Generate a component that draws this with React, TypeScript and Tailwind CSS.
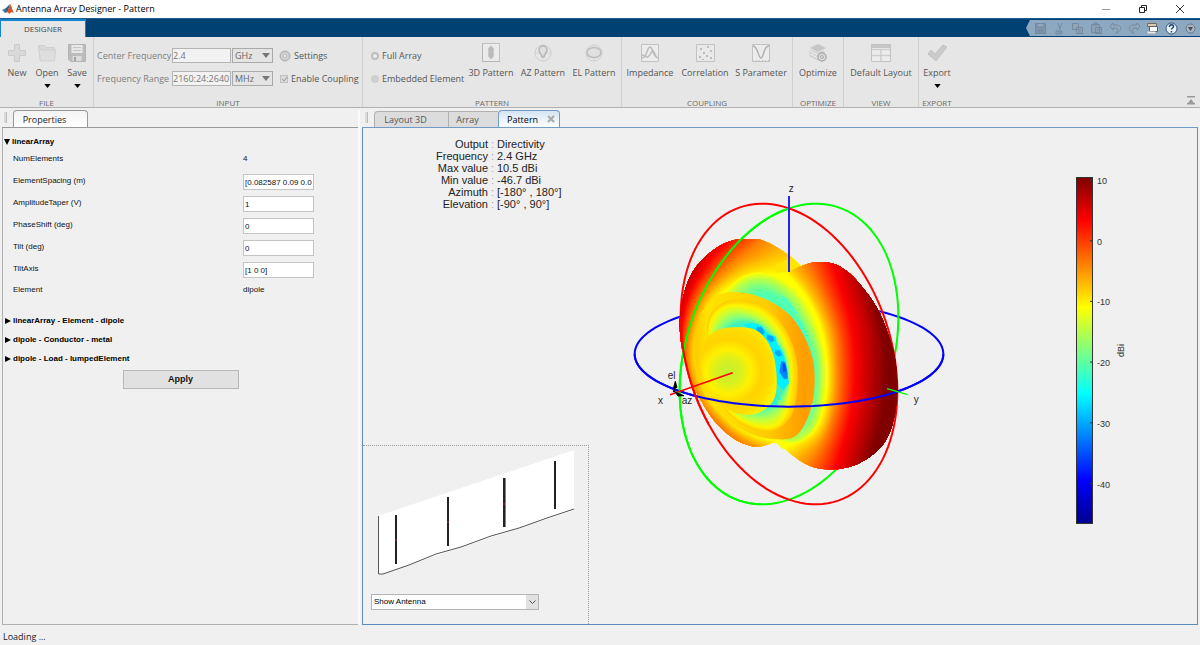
import React from 'react';

type Point = [number, number];

interface Contour {
    color: [number, number, number];
    points: Point[];
}

/* ---------- Geometry helpers for the radiation pattern ---------- */

// Smooth curve through a list of points, a repeated point makes a corner
const smooth = (pts: Point[], closed: boolean) => {
    const n = pts.length;
    const at = (i: number) => (closed ? pts[(i + n) % n] : pts[Math.min(Math.max(i, 0), n - 1)]);
    let d = `M${pts[0][0]} ${pts[0][1]}`;
    const segments = closed ? n : n - 1;
    for (let i = 0; i < segments; i++) {
        const [p0, p1, p2, p3] = [at(i - 1), at(i), at(i + 1), at(i + 2)];
        d += `C${p1[0] + (p2[0] - p0[0]) / 6} ${p1[1] + (p2[1] - p0[1]) / 6} ${p2[0] - (p3[0] - p1[0]) / 6} ${p2[1] - (p3[1] - p1[1]) / 6} ${p2[0]} ${p2[1]}`;
    }
    return closed ? d + 'Z' : d;
};

// Great circle of the reference sphere, spanned by two projected axes
const ring = (u: Point, v: Point, from: number, to: number) => {
    const pts: string[] = [];
    for (let a = from; a <= to; a += 3) {
        const c = Math.cos((a * Math.PI) / 180);
        const s = Math.sin((a * Math.PI) / 180);
        pts.push(`${(507 + c * u[0] + s * v[0]).toFixed(1)},${(552 + c * u[1] + s * v[1]).toFixed(1)}`);
    }
    return pts.join(' ');
};

const STEPS = 10;

// Blends neighbouring contours so the colour bands look continuous
const Bands = ({ contours, tail }: { contours: Contour[]; tail?: string }) => {
    const paths: React.ReactNode[] = [];
    for (let k = 0; k < contours.length - 1; k++) {
        const a = contours[k];
        const b = contours[k + 1];
        for (let s = 0; s < STEPS; s++) {
            const t = s / STEPS;
            const pts = a.points.map((p, i): Point => [p[0] + (b.points[i][0] - p[0]) * t, p[1] + (b.points[i][1] - p[1]) * t]);
            const rgb = a.color.map((c, i) => Math.round(c + (b.color[i] - c) * t));
            paths.push(<path key={`${k}-${s}`} d={smooth(pts, !tail) + (tail || '')} fill={`rgb(${rgb.join(',')})`} />);
        }
    }
    const last = contours[contours.length - 1];
    paths.push(<path key="last" d={smooth(last.points, !tail) + (tail || '')} fill={`rgb(${last.color.join(',')})`} />);
    return <>{paths}</>;
};

const leftLobe: Point[] = [
    [548, 292], [548, 292], [500, 250], [430, 212], [385, 209], [335, 212], [280, 240], [225, 295], [195, 360], [180, 440], [181, 500],
    [191, 560], [212, 630], [242, 690], [285, 755], [340, 805], [390, 827], [430, 828], [465, 817], [500, 830], [560, 700], [580, 450],
];

const rightLobe: Point[] = [
    [507, 306], [507, 306], [545, 288], [590, 276], [640, 281], [680, 303], [722, 345], [770, 412], [800, 480], [824, 560], [832, 650],
    [825, 730], [808, 790], [780, 835], [735, 870], [690, 890], [640, 898], [590, 894], [540, 872], [465, 817], [465, 817], [400, 700], [400, 450],
];

const leftContours: Contour[] = [
    { color: [255, 255, 0], points: [[560, 315], [480, 315], [390, 325], [300, 380], [250, 470], [240, 560], [265, 660], [335, 750], [410, 797], [480, 812]] },
    { color: [255, 190, 0], points: [[505, 240], [440, 270], [365, 300], [280, 365], [232, 455], [216, 560], [245, 665], [315, 755], [385, 805], [465, 835]] },
    { color: [255, 128, 0], points: [[440, 200], [385, 245], [325, 290], [255, 365], [215, 450], [202, 560], [228, 670], [298, 762], [362, 815], [435, 850]] },
    { color: [255, 64, 0], points: [[395, 195], [340, 238], [290, 285], [230, 365], [200, 450], [190, 560], [212, 680], [275, 780], [335, 840], [390, 860]] },
    { color: [250, 0, 0], points: [[335, 195], [295, 238], [255, 290], [210, 370], [188, 450], [178, 560], [195, 690], [255, 800], [300, 860], [350, 880]] },
    { color: [180, 0, 0], points: [[265, 200], [235, 250], [210, 300], [186, 370], [172, 450], [160, 560], [170, 700], [220, 820], [270, 880], [320, 900]] },
];

const rightContours: Contour[] = [
    { color: [255, 255, 0], points: [[470, 290], [545, 365], [594, 455], [618, 560], [616, 680], [580, 780], [490, 830]] },
    { color: [255, 190, 0], points: [[505, 280], [570, 365], [615, 460], [634, 560], [632, 685], [600, 790], [515, 865]] },
    { color: [255, 128, 0], points: [[545, 265], [598, 360], [637, 460], [652, 560], [649, 690], [617, 800], [560, 890]] },
    { color: [255, 64, 0], points: [[585, 255], [627, 360], [661, 460], [675, 565], [671, 695], [642, 805], [600, 910]] },
    { color: [250, 0, 0], points: [[625, 250], [663, 360], [692, 460], [704, 570], [698, 700], [672, 810], [640, 915]] },
    { color: [190, 0, 0], points: [[680, 260], [713, 360], [740, 460], [750, 570], [744, 700], [720, 810], [690, 915]] },
    { color: [128, 0, 0], points: [[735, 290], [762, 380], [785, 470], [797, 570], [791, 700], [770, 800], [740, 900]] },
];

// Trough between the main lobe and the first side lobe
const outerTrough: Contour[] = [
    { color: [255, 255, 0], points: [[340, 340], [430, 308], [520, 350], [578, 430], [614, 550], [614, 690], [578, 790], [490, 816], [330, 700], [260, 480]] },
    { color: [192, 255, 64], points: [[350, 352], [430, 325], [505, 362], [562, 440], [602, 550], [602, 685], [572, 780], [490, 806], [330, 690], [270, 480]] },
    { color: [128, 255, 128], points: [[375, 365], [432, 347], [497, 384], [550, 455], [590, 555], [592, 670], [562, 760], [480, 790], [340, 680], [280, 480]] },
    { color: [80, 255, 176], points: [[390, 390], [440, 370], [492, 402], [538, 462], [574, 550], [580, 610], [550, 680], [480, 700], [350, 640], [300, 480]] },
];

const sideLobe: Point[] = [
    [335, 366], [400, 374], [465, 402], [520, 447], [558, 510], [581, 580], [583, 660], [573, 715], [553, 765], [522, 801],
    [470, 808], [400, 795], [330, 755], [268, 695], [240, 640], [225, 560], [230, 480], [250, 420], [285, 380],
];

// Trough between the first side lobe and the end-fire lobe
const innerTrough: Contour[] = [
    { color: [255, 200, 0], points: [[325, 392], [425, 404], [492, 470], [528, 560], [532, 650], [515, 735], [458, 783], [375, 768], [300, 700], [270, 620], [262, 530], [268, 440]] },
    { color: [255, 245, 0], points: [[325, 407], [412, 418], [475, 475], [510, 560], [512, 650], [495, 735], [452, 773], [375, 756], [305, 695], [274, 610], [266, 530], [275, 450]] },
    { color: [200, 255, 55], points: [[332, 425], [402, 435], [460, 480], [503, 560], [507, 650], [484, 722], [442, 752], [370, 742], [312, 690], [280, 610], [272, 530], [285, 465]] },
    { color: [128, 255, 128], points: [[345, 444], [400, 450], [452, 486], [497, 560], [503, 650], [474, 705], [432, 732], [370, 722], [320, 680], [285, 610], [280, 530], [300, 477]] },
    { color: [64, 240, 190], points: [[355, 460], [402, 462], [445, 495], [490, 560], [496, 640], [470, 685], [425, 712], [370, 710], [330, 670], [295, 610], [295, 540], [315, 485]] },
];

const endLobe: Point[] = [
    [340, 472], [400, 477], [438, 508], [460, 555], [470, 620], [465, 680], [440, 714], [400, 733], [350, 730], [295, 697],
    [257, 645], [241, 580], [250, 520], [285, 483],
];

const RadiationPattern = () => (
    <svg viewBox="0 0 1020 1035" className="w-full max-w-[340px]" role="img" aria-label="3D directivity pattern">
        <defs>
            <clipPath id="left-lobe"><path d={smooth(leftLobe, true)} /></clipPath>
            <clipPath id="right-lobe"><path d={smooth(rightLobe, true)} /></clipPath>
            <linearGradient id="side-lobe" x1="0" x2="1" y1="0" y2="0">
                <stop offset="0" stopColor="#ffc800" />
                <stop offset="0.1" stopColor="#ffe400" />
                <stop offset="0.3" stopColor="#ffdc00" />
                <stop offset="0.6" stopColor="#ffcc00" />
                <stop offset="0.8" stopColor="#ffac00" />
                <stop offset="0.92" stopColor="#ff9c00" />
                <stop offset="1" stopColor="#ffa400" />
            </linearGradient>
            <radialGradient id="end-lobe" gradientUnits="userSpaceOnUse" cx="325" cy="605" r="150">
                <stop offset="0" stopColor="#c4f02c" />
                <stop offset="0.25" stopColor="#d8f020" />
                <stop offset="0.45" stopColor="#fff000" />
                <stop offset="0.65" stopColor="#ffd400" />
                <stop offset="0.85" stopColor="#ffdc00" />
                <stop offset="1" stopColor="#fff000" />
            </radialGradient>
        </defs>

        {/* Circles behind the surface */}
        <g fill="none" strokeWidth="6">
            <polyline points={ring([463, 0], [0, 158], 0, 360)} stroke="#0000ff" />
            <polyline points={ring([328, -111], [0, -437], 0, 360)} stroke="#00ff00" />
            <polyline points={ring([325, 111], [0, -437], 0, 360)} stroke="#ff0000" />
        </g>

        {/* Main lobe */}
        <g clipPath="url(#left-lobe)">
            <rect width="1020" height="1035" fill="#ffff00" />
            <Bands contours={leftContours} tail="L0 1035L0 0Z" />
            <path d="M560 292L507 306L468 308L466 285L515 262Z" fill="#ffe600" />
        </g>
        <g clipPath="url(#right-lobe)">
            <path d="M440 830L420 700L430 400L507 306L620 400L620 860Z" fill="#ffff00" />
            <Bands contours={rightContours} tail="L1020 1035L1020 0Z" />
        </g>

        {/* Side lobes */}
        <Bands contours={outerTrough} />
        <path d="M478 372L500 385L520 412L535 432L522 432L495 404Z" fill="#50ffc0" />
        <path d="M530 445L545 455L552 480L562 500L554 506L545 490Z" fill="#40ffd0" />
        <path d={smooth(sideLobe, true)} fill="url(#side-lobe)" />
        <Bands contours={innerTrough} />
        <g fill="#00f0ff">
            <path d="M368 464L395 459L425 466L440 488L468 500L470 520L488 545L500 590L507 640L490 660L470 640L464 560L438 510L400 480Z" />
            <path d="M466 668L474 672L484 690L470 688L474 705L455 703L430 722L444 700Z" fill="#2cf0d0" />
        </g>
        <g fill="#00a8ff">
            <path d="M412 470L426 472L434 486L428 494L414 489L408 478Z" />
            <path d="M442 494L458 498L464 512L452 517L440 506Z" />
            <path d="M466 540L480 542L486 556L474 560L464 550Z" />
            <path d="M484 572L496 577L502 604L503 626L492 628L478 606Z" fill="#0084ff" />
            <path d="M488 578L495 582L498 604L489 606Z" fill="#0048f0" />
        </g>
        <path d={smooth(endLobe, true)} fill="url(#end-lobe)" />

        {/* Circles and axes in front of the surface */}
        <g fill="none" strokeWidth="6">
            <polyline points={ring([463, 0], [0, 158], 0, 180)} stroke="#0000ff" />
            <polyline points={ring([328, -111], [0, -437], 90, 255)} stroke="#00ff00" />
            <polyline points={ring([325, 111], [0, -437], 180, 222)} stroke="#ff0000" />
            <path d="M507 78V306" stroke="#2424f8" />
            <path d="M150 674L338 608" stroke="#ff0000" strokeWidth="5" />
            <path d="M801 656L863 674" stroke="#00ff00" strokeWidth="4" />
        </g>

        {/* Azimuth and elevation arrows */}
        <g stroke="#000" strokeWidth="3" fill="#000">
            <path d="M160 656L166 634L171 652Z" />
            <path d="M166 667L192 677L174 678Z" />
            <path d="M164 655L161 664L170 668" fill="none" strokeWidth="4" />
        </g>
        <g className="font-['Liberation_Sans',sans-serif] text-[30px]" fill="#262626">
            <text x="506" y="66">z</text>
            <text x="114" y="701">x</text>
            <text x="881" y="698">y</text>
            <text x="143" y="627">el</text>
            <text x="185" y="701">az</text>
        </g>
    </svg>
);

const ticks = [10, 0, -10, -20, -30, -40];

const ColorBar = () => (
    <svg viewBox="0 0 60 350" className="w-[60px] h-[350px]" role="img" aria-label="Directivity scale in dBi">
        <defs>
            <linearGradient id="jet" x1="0" x2="0" y1="0" y2="1">
                <stop offset="0" stopColor="#800000" />
                <stop offset="0.125" stopColor="#ff0000" />
                <stop offset="0.375" stopColor="#ffff00" />
                <stop offset="0.625" stopColor="#00ffff" />
                <stop offset="0.875" stopColor="#0000ff" />
                <stop offset="1" stopColor="#00008f" />
            </linearGradient>
        </defs>
        <rect x="0.5" y="0.5" width="16" height="346" fill="url(#jet)" stroke="#333" />
        <g className="font-['Liberation_Sans',sans-serif] text-[9px]" fill="#333">
            {ticks.map((tick) => (
                <React.Fragment key={tick}>
                    <path d={`M14 ${3 + (10 - tick) * 6.07}h3`} stroke="#333" />
                    <text x="21" y={7 + (10 - tick) * 6.07}>{tick}</text>
                </React.Fragment>
            ))}
            <text transform="translate(48 180) rotate(-90)">dBi</text>
        </g>
    </svg>
);

/* ---------- Toolstrip icons ---------- */

const Icon = ({ children }: { children: React.ReactNode }) => (
    <svg viewBox="0 0 20 20" className="w-5 h-5" fill="none" stroke="#c2c2c2" aria-hidden="true">{children}</svg>
);

const PlusIcon = () => <Icon><path d="M7.500 1.500h5v6h6v5h-6v6h-5v-6h-6v-5h6z" fill="#d9d9d9" stroke="#cacaca" /></Icon>;

const FolderIcon = () => (
    <Icon>
        <path d="M1.500 2.500h6l2 2h8v13h-14z" fill="#dadada" stroke="#cecece" />
        <path d="M1.500 3l3 4h14l-1 11h-14z" fill="#dedede" stroke="#d0d0d0" />
    </Icon>
);

const SaveIcon = () => (
    <Icon>
        <path d="M1.500 1.500h17v17h-15l-2-2z" fill="#bcbcbc" stroke="#b4b4b4" />
        <path d="M4.500 2h11v8h-11z" fill="#e8e8e8" stroke="none" />
        <path d="M6 4.500h8M6 7.500h8" stroke="#c4c4c4" />
        <path d="M5.500 13h9v5h-9z" fill="#dcdcdc" stroke="none" />
        <path d="M7 14h2v4h-2z" fill="#a5a5a5" stroke="none" />
    </Icon>
);

const Pattern3DIcon = () => (
    <Icon>
        <path d="M1.500 .5h17v18h-17z" fill="#ebebeb" />
        <path d="M1.500 18.500h17M1.500 .5v18" strokeDasharray="1 1" stroke="#aaa" />
        <path d="M10 3c3 2 3 4 2 6 1 2 1 5-2 7-3-2-3-5-2-7-1-2-1-4 2-6z" fill="#bababa" />
    </Icon>
);

const AzPatternIcon = () => (
    <Icon>
        <circle cx="10" cy="10" r="8" stroke="#cfcfcf" />
        <path d="M1 10h18M10 1v18" stroke="#d6d6d6" />
        <path d="M9 14c0-3-3-4-3-7a4 4 0 0 1 8 0c0 3-3 4-3 7z" strokeWidth="1.500" fill="#e0e0e0" stroke="#b6b6b6" />
    </Icon>
);

const ElPatternIcon = () => (
    <Icon>
        <circle cx="10" cy="10" r="8" stroke="#cfcfcf" />
        <path d="M1 10h18M10 1v18" stroke="#d6d6d6" />
        <ellipse cx="10" cy="9.500" rx="7" ry="5" strokeWidth="1.500" fill="#e0e0e0" stroke="#bcbcbc" />
    </Icon>
);

const ImpedanceIcon = () => (
    <Icon>
        <path d="M1.500 1.500h17v17h-17z" fill="#ececec" />
        <path d="M2 15c5 0 5-11 8-11s2 9 8 11M2 12c4 0 4 4 7 1s3-8 5-4 2 6 4 6" stroke="#bcbcbc" strokeWidth="1.500" />
    </Icon>
);

const CorrelationIcon = () => (
    <Icon>
        <path d="M1.500 1.500h18v17h-18z" fill="#e9e9e9" />
        <path d="M5 5h2v2h-2zM12 3h2v2h-2zM15 7h2v2h-2zM8 9h2v2h-2zM4 13h2v2h-2zM11 12h2v2h-2zM15 14h2v2h-2zM7 16h2v1h-2z" fill="#bcbcbc" stroke="none" />
    </Icon>
);

const SParameterIcon = () => (
    <Icon>
        <path d="M1.500 1.500h17v17h-17z" fill="#ececec" />
        <path d="M2 3c5 0 5 12 8 12s2-12 8-12" strokeWidth="1.500" stroke="#b0b0b0" />
        <path d="M2 17.500h16" strokeDasharray="1 2" />
    </Icon>
);

const OptimizeIcon = () => (
    <Icon>
        <path d="M2 7v6l8 4 6-3v-6" fill="#d6d6d6" stroke="#cdcdcd" />
        <path d="M2 5l8-4 8 4-8 4z" fill="#c6c6c6" stroke="#d6d6d6" />
        <path d="M2 8l8 4M2 11l8 4" stroke="#eee" />
        <circle cx="14" cy="14" r="4" fill="#dedede" stroke="#acacac" strokeWidth="1.500" />
        <circle cx="14" cy="14" r="1.500" stroke="#acacac" />
    </Icon>
);

const LayoutIcon = () => (
    <Icon>
        <path d="M.5 1.500h19v17h-19z" fill="#ececec" />
        <path d="M1 2h18v3h-18z" fill="#c6c6c6" stroke="none" />
        <path d="M1 6.500h18M1 12.500h18M10 6v12" stroke="#cdcdcd" strokeWidth="1.500" />
    </Icon>
);

const CheckIcon = () => <Icon><path d="M1 11l3-4 4 4 8-9 4 2-11 14z" fill="#cacaca" stroke="#c2c2c2" /></Icon>;

const GearIcon = () => (
    <svg viewBox="0 0 12 12" className="w-3 h-3" fill="none" stroke="#b0b0b0" aria-hidden="true">
        <circle cx="6" cy="6" r="4" strokeWidth="2" stroke="#cacaca" />
        <circle cx="6" cy="6" r="5" />
        <circle cx="6" cy="6" r="2" />
    </svg>
);

const DownArrow = ({ className }: { className: string }) => (
    <svg viewBox="0 0 8 5" className={className} fill="currentColor" aria-hidden="true"><path d="M0 0h8L4 5z" /></svg>
);

/* ---------- Toolstrip ---------- */

interface ToolButtonProps {
    icon: React.ReactNode;
    label: string;
    className: string;
    menu?: boolean;
}

const ToolButton = ({ icon, label, className, menu }: ToolButtonProps) => (
    <button type="button" className={`flex flex-col items-center shrink-0 ${className}`}>
        {icon}
        <span className="mt-1 h-3 leading-3 whitespace-nowrap">{label}</span>
        {menu && <DownArrow className="w-[7px] h-1 mt-[5px] text-black" />}
    </button>
);

interface ToolGroupProps {
    title: string;
    className: string;
    children: React.ReactNode;
}

const ToolGroup = ({ title, className, children }: ToolGroupProps) => (
    <section aria-label={title} className={`flex flex-col shrink-0 justify-between pt-[6px] ${className}`}>
        <div className="flex">{children}</div>
        <div className="text-center text-[8px] leading-[8px] text-[#6a6a6a]">{title}</div>
    </section>
);

const UnitSelect = ({ label, value }: { label: string; value: string }) => (
    <span className="relative flex">
        <select aria-label={label} defaultValue={value} className="appearance-none w-[41px] h-[15px] bg-[#e4e4e4] border border-[#a9a9a9] pl-[2px] text-[9px] leading-none text-[#666]">
            <option>GHz</option>
            <option>MHz</option>
        </select>
        <DownArrow className="absolute right-[9px] top-[5px] w-2 h-[5px] text-[#777] pointer-events-none" />
    </span>
);

const Toolstrip = () => (
    <div className="flex h-[71px] bg-[#e6e6e6] border-b border-[#b0b0b0] text-[9px] text-[#555]">
        <ToolGroup title="FILE" className="w-[94px] px-[2px] border-r border-[#cfcfcf]">
            <ToolButton icon={<PlusIcon />} label="New" className="w-[30px]" />
            <ToolButton icon={<FolderIcon />} label="Open" className="w-[30px]" menu />
            <ToolButton icon={<SaveIcon />} label="Save" className="w-[30px]" menu />
        </ToolGroup>

        <ToolGroup title="INPUT" className="w-[269px] px-[3px] border-r border-[#cfcfcf]">
            <div className="grid grid-cols-[75px_60px_47px_auto] gap-y-2 items-center pt-[5px] whitespace-nowrap">
                <label htmlFor="center-frequency" className="text-[#808080]">Center Frequency</label>
                <input id="center-frequency" defaultValue="2.4" className="w-[59px] h-[15px] bg-[#f2f2f2] border border-[#b4b4b4] text-[#777]" />
                <UnitSelect label="Center frequency unit" value="GHz" />
                <button type="button" className="flex items-center gap-[3px] leading-3"><GearIcon />Settings</button>

                <label htmlFor="frequency-range" className="text-[#808080]">Frequency Range</label>
                <input id="frequency-range" defaultValue="2160:24:2640" className="w-[59px] h-[15px] bg-[#f2f2f2] border border-[#b4b4b4] text-[#777]" />
                <UnitSelect label="Frequency range unit" value="MHz" />
                <label className="flex items-center gap-[3px] pl-px leading-3">
                    <span className="relative flex">
                        <input type="checkbox" defaultChecked className="appearance-none w-2 h-2 bg-[#dadada] border border-[#c0c0c0]" />
                        <svg viewBox="0 0 8 8" className="absolute inset-0 w-2 h-2 pointer-events-none" fill="none" stroke="#999" aria-hidden="true"><path d="M2 4l2 2 3-4" /></svg>
                    </span>
                    Enable Coupling
                </label>
            </div>
        </ToolGroup>

        <ToolGroup title="PATTERN" className="w-[259px] border-r border-[#cfcfcf]">
            <div className="flex flex-col gap-[11px] w-[102px] shrink-0 pl-2 pt-[7px] whitespace-nowrap leading-3">
                <label className="flex items-center gap-[3px]">
                    <input type="radio" name="scope" defaultChecked className="appearance-none w-2 h-2 rounded-full border-2 border-[#bcbcbc] bg-[#eee]" />
                    Full Array
                </label>
                <label className="flex items-center gap-[3px]">
                    <input type="radio" name="scope" className="appearance-none w-2 h-2 rounded-full bg-[#cfcfcf]" />
                    Embedded Element
                </label>
            </div>
            <ToolButton icon={<Pattern3DIcon />} label="3D Pattern" className="w-[52px]" />
            <ToolButton icon={<AzPatternIcon />} label="AZ Pattern" className="w-[52px]" />
            <ToolButton icon={<ElPatternIcon />} label="EL Pattern" className="w-[50px]" />
        </ToolGroup>

        <ToolGroup title="COUPLING" className="w-[171px] border-r border-[#cfcfcf]">
            <ToolButton icon={<ImpedanceIcon />} label="Impedance" className="w-[56px]" />
            <ToolButton icon={<CorrelationIcon />} label="Correlation" className="w-[54px]" />
            <ToolButton icon={<SParameterIcon />} label="S Parameter" className="w-[58px]" />
        </ToolGroup>

        <ToolGroup title="OPTIMIZE" className="w-[51px] border-r border-[#cfcfcf]">
            <ToolButton icon={<OptimizeIcon />} label="Optimize" className="w-[50px]" />
        </ToolGroup>

        <ToolGroup title="VIEW" className="w-[75px] border-r border-[#cfcfcf]">
            <ToolButton icon={<LayoutIcon />} label="Default Layout" className="w-[74px]" />
        </ToolGroup>

        <ToolGroup title="EXPORT" className="w-[36px]">
            <ToolButton icon={<CheckIcon />} label="Export" className="w-[36px]" menu />
        </ToolGroup>

        <button type="button" aria-label="Minimize toolstrip" className="self-end ml-auto mr-[5px] mb-[2px]">
            <svg viewBox="0 0 8 9" className="w-2 h-[9px]" fill="#999" aria-hidden="true"><path d="M0 0h8v1.500H0zM4 3l3 4H1zM0 7h8v1.500H0z" /></svg>
        </button>
    </div>
);

/* ---------- Title bar and quick access ---------- */

const TitleBar = () => (
    <header className="flex items-center h-[18px] bg-white pl-[2px] pr-[2px] text-[9px] text-black">
        <svg viewBox="0 0 12 12" className="w-3 h-3" aria-hidden="true">
            <path d="M0 7l4-2 2 2-3 3z" fill="#3f7fb5" />
            <path d="M4 5l4-4-2 7-3 2z" fill="#2f5f8f" />
            <path d="M8 1c2 2 2 6 4 9-3-2-4 0-5 1-1-2-2-2-4-1 3-2 4-5 5-9z" fill="#d6542a" />
        </svg>
        <h1 className="pl-[2px] whitespace-nowrap">Antenna Array Designer - Pattern</h1>
        <div className="flex ml-auto text-[#333]">
            <button type="button" aria-label="Minimize" className="flex justify-center w-[37px]">
                <svg viewBox="0 0 8 8" className="w-2 h-2" stroke="#999" aria-hidden="true"><path d="M0 4.500h8" /></svg>
            </button>
            <button type="button" aria-label="Restore" className="flex justify-center w-[37px]">
                <svg viewBox="0 0 8 8" className="w-2 h-2" fill="none" stroke="#222" aria-hidden="true"><path d="M.5 2.500h5v5h-5zM2.500 2v-1.500h5v5h-1.500" /></svg>
            </button>
            <button type="button" aria-label="Close" className="flex justify-center w-[37px]">
                <svg viewBox="0 0 8 8" className="w-2 h-2" stroke="#333" aria-hidden="true"><path d="M0 0l8 8M8 0L0 8" /></svg>
            </button>
        </div>
    </header>
);

const quickActions = [
    { name: 'Save', art: <path d="M1.500 1.500h10v10h-10zM3 2v3h7v-3M4 12v-4h5v4M6 8v3" fill="#8096ad" /> },
    { name: 'Cut', art: <path d="M5 1l2 7M9 1l-3 7M3 9h3v3h-3zM7 9h2v3h-2z" fill="none" /> },
    { name: 'Copy', art: <path d="M1.500 1.500h6v6h-6zM5.500 5.500h6v6h-6zM7 8h3M7 10h3" fill="#93a5b7" /> },
    { name: 'Paste', art: <path d="M1.500 2.500h8v8h-8zM4 1h3v2h-3zM5.500 5.500h6v6h-6zM7 8h3" fill="#8ba0b6" /> },
    { name: 'Undo', art: <path d="M1 4l3-3v2h4c5 0 5 7-1 8 3-3 2-5-1-5h-2v2z" fill="#95a9bd" /> },
    { name: 'Redo', art: <path d="M12 4l-3-3v2h-4c-5 0-5 7 1 8-3-3-2-5 1-5h2v2z" fill="#95a9bd" /> },
    { name: 'Windows', art: <><path d="M1.500 1.500h9v3h-9z" fill="#d9c9b5" stroke="#75685c" /><path d="M3.500 4.500h8v5h-8z" fill="#fff" stroke="#55606c" /><path d="M1.500 10.500h8" stroke="#e8e8e8" strokeWidth="2" /></> },
    { name: 'Help', art: <><circle cx="6.500" cy="6.500" r="5.500" fill="#e8f0f8" stroke="#2d5077" /><path d="M4.500 5c0-3 4-3 4-.5 0 1.500-2 1.500-2 3M6.500 9v1.500" fill="none" stroke="#1d4674" strokeWidth="1.500" /></> },
    { name: 'More', art: <><circle cx="6.500" cy="6.500" r="4.500" fill="#a5b5c4" stroke="#6a7580" /><path d="M4 5h5l-2.500 4z" fill="#4a4a52" stroke="none" /></> },
];

const TabBar = () => (
    <div className="flex items-end h-[19px] bg-[#004173] border-t border-t-[#1c5b92]">
        <button type="button" className="w-[86px] h-[18px] shrink-0 bg-[#e6e6e6] border-t-2 border-x border-[#1583cc] text-[8px] leading-none text-[#444]">DESIGNER</button>
        <div className="flex items-center justify-around w-[174px] h-4 self-center ml-auto pl-[5px] bg-[#8da9c2] [clip-path:polygon(4px_0,100%_0,100%_100%,4px_100%,0_50%)]">
            {quickActions.map((action) => (
                <button key={action.name} type="button" aria-label={action.name}>
                    <svg viewBox="0 0 13 13" className="w-[13px] h-[13px]" stroke="#7389a0" aria-hidden="true">{action.art}</svg>
                </button>
            ))}
        </div>
    </div>
);

/* ---------- Properties panel ---------- */

const fields = [
    { id: 'spacing', label: 'ElementSpacing (m)', value: '[0.082587 0.09 0.082587]' },
    { id: 'taper', label: 'AmplitudeTaper (V)', value: '1' },
    { id: 'phase', label: 'PhaseShift (deg)', value: '0' },
    { id: 'tilt', label: 'Tilt (deg)', value: '0' },
    { id: 'tilt-axis', label: 'TiltAxis', value: '[1 0 0]' },
];

const sections = ['linearArray - Element - dipole', 'dipole - Conductor - metal', 'dipole - Load - lumpedElement'];

const PropertiesPanel = () => (
    <aside className="flex flex-col w-[360px] shrink-0 pl-[2px] bg-[#f0f0f0] border-r-2 border-[#fafafa]">
        <div className="flex items-end h-[18px] pl-[2px] gap-[6px] border-b border-[#999]">
            <span className="w-[3px] h-[11px] mb-1 bg-[#dadada] border-r border-[#bbb]" />
            <button type="button" className="w-[75px] h-[17px] pr-3 bg-gradient-to-b from-[#f4f4f4] to-white border border-b-0 border-[#999] rounded-t text-[9px] leading-none text-[#222]">Properties</button>
        </div>

        <div className="flex-1 flex flex-col border-l border-b border-[#b0b0b0] pt-2 font-['Liberation_Sans',sans-serif] text-[8px] text-[#111]">
            <button type="button" className="flex items-center h-3 pl-px gap-[2px] font-bold text-black">
                <svg viewBox="0 0 6 6" className="w-[6px] h-[6px]" aria-hidden="true"><path d="M0 0h6L3 6z" /></svg>
                linearArray
            </button>
            <dl className="grid grid-cols-[230px_1fr] items-center h-[23px] pb-[2px] pl-[10px]">
                <dt>NumElements</dt>
                <dd>4</dd>
            </dl>
            {fields.map((field) => (
                <div key={field.id} className="grid grid-cols-[230px_1fr] items-center h-[22px] pl-[10px]">
                    <label htmlFor={field.id} className="pb-[3px]">{field.label}</label>
                    <input id={field.id} defaultValue={field.value} className="w-[71px] h-4 bg-white border border-[#c4c4c4] px-px" />
                </div>
            ))}
            <dl className="grid grid-cols-[230px_1fr] items-center h-[18px] pl-[10px]">
                <dt>Element</dt>
                <dd>dipole</dd>
            </dl>

            <div className="flex flex-col mt-3">
                {sections.map((section) => (
                    <button key={section} type="button" className="flex items-center h-[19px] pl-[2px] gap-[2px] font-bold text-black">
                        <svg viewBox="0 0 6 6" className="w-[6px] h-[6px]" aria-hidden="true"><path d="M0 0l6 3-6 3z" /></svg>
                        {section}
                    </button>
                ))}
            </div>
            <button type="button" className="self-center w-[116px] h-[19px] mt-[2px] bg-[#e1e1e1] border border-[#b8b8b8] text-[9px] font-bold">Apply</button>
        </div>
    </aside>
);

/* ---------- Pattern document ---------- */

const readout = [
    ['Output', 'Directivity'],
    ['Frequency', '2.4 GHz'],
    ['Max value', '10.5 dBi'],
    ['Min value', '-46.7 dBi'],
    ['Azimuth', '[-180° , 180°]'],
    ['Elevation', '[-90° , 90°]'],
];

const AntennaInset = () => (
    <div className="flex flex-col items-start h-[179px] pl-2 pt-1 border-t border-r border-dotted border-[#999]">
        <svg viewBox="0 0 210 130" className="w-[210px] h-[130px]" role="img" aria-label="Array of four dipoles">
            <path d="M7 66L203 0V60L7 125Z" fill="#fff" />
            <path d="M7.500 66V124L12 124L38 115L65 104L90 97L120 86L148 78L176 68L203 59" fill="none" stroke="#555" />
            <g stroke="#222" strokeWidth="2">
                <path d="M25 65V114" />
                <path d="M77 47V96" />
                <path d="M133 28V77" />
                <path d="M184 11V59" />
            </g>
            <path d="M134.500 28V77" stroke="#a67c3c" />
            <path d="M24 90h2M76 72h2M132 54h2" stroke="#c0282d" />
        </svg>
        <div className="relative mt-[14px]">
            <select aria-label="Inset content" className="appearance-none block w-[168px] h-4 bg-white border border-[#b4b4b4] pl-[2px] font-['Liberation_Sans',sans-serif] text-[8px] leading-none text-black">
                <option>Show Antenna</option>
                <option>Hide Antenna</option>
            </select>
            <span className="absolute right-px top-px flex items-center justify-center w-3 h-[14px] bg-[#e1e1e1] pointer-events-none">
                <svg viewBox="0 0 7 5" className="w-[7px] h-[5px]" fill="none" stroke="#555" aria-hidden="true"><path d="M.5 .5l3 3 3-3" /></svg>
            </span>
        </div>
    </div>
);

const PatternDocument = () => (
    <main className="flex-1 flex flex-col min-w-0 pl-[2px] pr-[2px] bg-[#f0f0f0]">
        <div role="tablist" className="flex items-end h-[18px] pl-[3px] border-b border-[#6f9bc4] text-[9px] text-[#555]">
            <span className="w-[3px] h-[11px] mb-1 bg-[#dadada] border-r border-[#bbb]" />
            <button type="button" role="tab" aria-selected="false" className="w-[75px] h-4 ml-[6px] pr-3 bg-[#dcdcdc] border border-b-0 border-[#b0b0b0] rounded-tl leading-none">Layout 3D</button>
            <button type="button" role="tab" aria-selected="false" className="w-[49px] h-4 pr-3 bg-[#dcdcdc] border-t border-[#b0b0b0] leading-none">Array</button>
            <div className="flex items-center w-[62px] h-[17px] pl-2 gap-[9px] bg-gradient-to-b from-[#d4e4f3] to-white border border-b-0 border-[#6f9bc4] rounded-t">
                <button type="button" role="tab" aria-selected="true" className="leading-none text-black">Pattern</button>
                <button type="button" aria-label="Close Pattern">
                    <svg viewBox="0 0 8 8" className="w-2 h-2" stroke="#aaa" strokeWidth="2" aria-hidden="true"><path d="M1 1l6 6M7 1L1 7" /></svg>
                </button>
            </div>
        </div>

        <div className="flex-1 flex border border-t-0 border-[#5f8db9]">
            <div className="flex flex-col justify-between w-[226px] shrink-0">
                <dl className="grid grid-cols-[125px_9px_1fr] pt-[10px] font-['Liberation_Sans',sans-serif] text-[11px] leading-3 text-[#222]">
                    {readout.map(([name, value]) => (
                        <React.Fragment key={name}>
                            <dt className="text-right">{name}</dt>
                            <span className="text-center text-[#aaa]">:</span>
                            <dd className="whitespace-nowrap">{value}</dd>
                        </React.Fragment>
                    ))}
                </dl>
                <AntennaInset />
            </div>
            <div className="flex-1 flex justify-center items-start pt-[42px]">
                <RadiationPattern />
            </div>
            <div className="w-[206px] shrink-0 pt-[49px] pl-[85px]">
                <ColorBar />
            </div>
        </div>
    </main>
);

const App: React.FC = () => {
    return (
        <div className="flex flex-col min-h-screen bg-[#f0f0f0] font-['Open_Sans','Noto_Sans',sans-serif]">
            <TitleBar />
            <TabBar />
            <Toolstrip />
            <div className="flex-1 flex pt-[2px]">
                <PropertiesPanel />
                <PatternDocument />
            </div>
            <footer className="flex items-center h-5 pl-[3px] pt-1 text-[9px] text-[#222]">Loading ...</footer>
        </div>
    );
};

export default App;
